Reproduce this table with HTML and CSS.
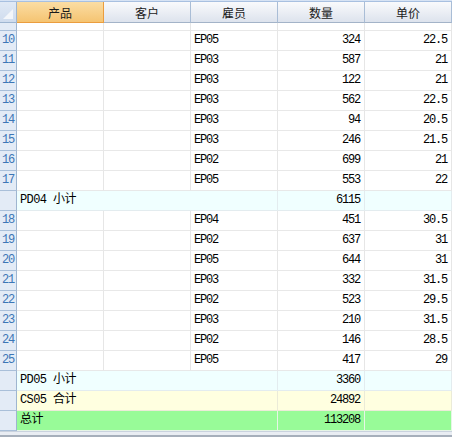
FILE: index.html
```html
<!DOCTYPE html>
<html>
<head>
<meta charset="utf-8">
<link rel="stylesheet" href="styles.css">
</head>
<body>
<div class="grid">
  <div class="topband"></div>
  <div class="header">
    <div class="corner"><span class="tri"></span></div>
    <div class="hcell sel">产品</div>
    <div class="hcell">客户</div>
    <div class="hcell">雇员</div>
    <div class="hcell">数量</div>
    <div class="hcell">单价</div>
  </div>
  <div class="viewport">
    <div class="rows">
      <div class="row"><div class="rh">9</div><div class="c"></div><div class="c"></div><div class="c">EP05</div><div class="c n">336</div><div class="c n">22</div></div>
      <div class="row"><div class="rh">10</div><div class="c"></div><div class="c"></div><div class="c">EP05</div><div class="c n">324</div><div class="c n">22.5</div></div>
      <div class="row"><div class="rh">11</div><div class="c"></div><div class="c"></div><div class="c">EP03</div><div class="c n">587</div><div class="c n">21</div></div>
      <div class="row"><div class="rh">12</div><div class="c"></div><div class="c"></div><div class="c">EP03</div><div class="c n">122</div><div class="c n">21</div></div>
      <div class="row"><div class="rh">13</div><div class="c"></div><div class="c"></div><div class="c">EP03</div><div class="c n">562</div><div class="c n">22.5</div></div>
      <div class="row"><div class="rh">14</div><div class="c"></div><div class="c"></div><div class="c">EP03</div><div class="c n">94</div><div class="c n">20.5</div></div>
      <div class="row"><div class="rh">15</div><div class="c"></div><div class="c"></div><div class="c">EP03</div><div class="c n">246</div><div class="c n">21.5</div></div>
      <div class="row"><div class="rh">16</div><div class="c"></div><div class="c"></div><div class="c">EP02</div><div class="c n">699</div><div class="c n">21</div></div>
      <div class="row"><div class="rh">17</div><div class="c"></div><div class="c"></div><div class="c">EP05</div><div class="c n">553</div><div class="c n">22</div></div>
      <div class="row sub"><div class="rh"></div><div class="c span3">PD04 小计</div><div class="c n">6115</div><div class="c n"></div></div>
      <div class="row"><div class="rh">18</div><div class="c"></div><div class="c"></div><div class="c">EP04</div><div class="c n">451</div><div class="c n">30.5</div></div>
      <div class="row"><div class="rh">19</div><div class="c"></div><div class="c"></div><div class="c">EP02</div><div class="c n">637</div><div class="c n">31</div></div>
      <div class="row"><div class="rh">20</div><div class="c"></div><div class="c"></div><div class="c">EP05</div><div class="c n">644</div><div class="c n">31</div></div>
      <div class="row"><div class="rh">21</div><div class="c"></div><div class="c"></div><div class="c">EP03</div><div class="c n">332</div><div class="c n">31.5</div></div>
      <div class="row"><div class="rh">22</div><div class="c"></div><div class="c"></div><div class="c">EP02</div><div class="c n">523</div><div class="c n">29.5</div></div>
      <div class="row"><div class="rh">23</div><div class="c"></div><div class="c"></div><div class="c">EP03</div><div class="c n">210</div><div class="c n">31.5</div></div>
      <div class="row"><div class="rh">24</div><div class="c"></div><div class="c"></div><div class="c">EP02</div><div class="c n">146</div><div class="c n">28.5</div></div>
      <div class="row"><div class="rh">25</div><div class="c"></div><div class="c"></div><div class="c">EP05</div><div class="c n">417</div><div class="c n">29</div></div>
      <div class="row sub"><div class="rh"></div><div class="c span3">PD05 小计</div><div class="c n">3360</div><div class="c n"></div></div>
      <div class="row total"><div class="rh"></div><div class="c span3">CS05 合计</div><div class="c n">24892</div><div class="c n"></div></div>
      <div class="row grand"><div class="rh"></div><div class="c span3">总计</div><div class="c n">113208</div><div class="c n"></div></div>
    </div>
  </div>
  <div class="hscroll"></div>
</div>
</body>
</html>
```

FILE: styles.css
```css
* { box-sizing: border-box; }
html, body { margin: 0; padding: 0; background: #ffffff; }
.grid {
  width: 452px;
  height: 437px;
  display: flex;
  flex-direction: column;
  overflow: hidden;
  font-family: "Liberation Mono", "Noto Sans CJK SC", monospace;
  font-size: 12px;
  letter-spacing: -1.2px;
  color: #000;
}
.topband {
  height: 3px;
  background: linear-gradient(#e4edf9, #c9d9ef);
  border-bottom: 1px solid #a8c0e0;
}
.header {
  display: flex;
  height: 21px;
  flex: none;
}
.corner {
  width: 17px;
  height: 21px;
  background: linear-gradient(#e0e9f5, #cfdcee);
  border-right: 1px solid #9eb5d0;
  border-bottom: 1px solid #9eb5d0;
  display: flex;
  align-items: flex-end;
  justify-content: flex-end;
  padding: 0 3px 3px 0;
}
.tri {
  width: 0;
  height: 0;
  border-left: 10px solid transparent;
  border-bottom: 10px solid #f3f6fa;
}
.hcell {
  width: 87px;
  height: 21px;
  display: flex;
  align-items: center;
  justify-content: center;
  font-family: "Noto Sans CJK SC", sans-serif;
  font-size: 12px;
  letter-spacing: 0;
  color: #1a1a1a;
  background: linear-gradient(#f9fafc, #dde3ed);
  border-right: 1px solid #a9bdd6;
  border-bottom: 1px solid #a3b3c8;
}
.hcell.sel {
  background: linear-gradient(#fbdda4, #f5c472);
  border-right: 1px solid #eb9d3e;
  border-bottom: 1px solid #eb9d3e;
}
.viewport {
  height: 408px;
  overflow: hidden;
  flex: none;
}
.rows {
  margin-top: -12px;
}
.row {
  display: flex;
  height: 20px;
}
.rh {
  width: 17px;
  flex: none;
  background: #e3ebf6;
  border-right: 1px solid #9eb5d0;
  border-bottom: 1px solid #a9bfd9;
  color: #3c76b6;
  line-height: 19px;
  text-align: center;
  overflow: hidden;
  white-space: nowrap;
}
.c {
  width: 87px;
  flex: none;
  border-right: 1px solid #e6e6e6;
  border-bottom: 1px solid #e8e8e8;
  line-height: 19px;
  padding: 0 4px 0 3px;
  white-space: nowrap;
  overflow: hidden;
}
.c.n { text-align: right; }
.c.span3 { width: 261px; letter-spacing: -0.6px; }
.sub .c { background: #f0ffff; border-color: #e3ecef; }
.total .c { background: #ffffe0; border-color: #ebebd8; }
.grand .c { background: #98fb98; border-color: #e6f5e6; }
.hscroll {
  flex: none;
  height: 6px;
  background: #e9edf3;
  border-top: 1px solid #c9d2de;
  border-bottom: 2px solid #a6afbb;
}
```
